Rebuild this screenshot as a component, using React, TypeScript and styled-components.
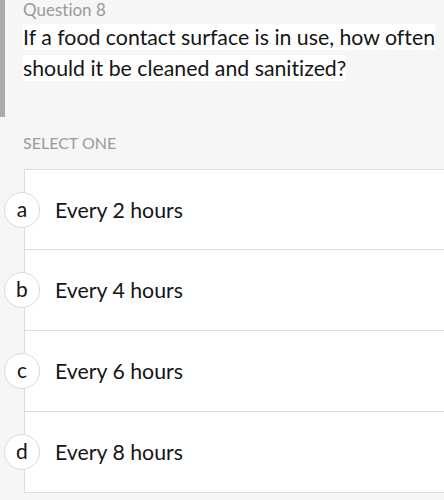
import React from "react";
import styled, { createGlobalStyle } from "styled-components";

const Global = createGlobalStyle`
  html, body {
    margin: 0;
    padding: 0;
    background: #f6f6f6;
    overflow: hidden;
  }
  body {
    font-family: Lato, "Noto Sans", sans-serif;
    font-variant-ligatures: none;
    font-feature-settings: "liga" 0, "clig" 0;
  }
`;

const Page = styled.div`
  position: relative;
  width: 444px;
  height: 500px;
  padding: 0 0 0 23px;
  box-sizing: border-box;
`;

const SideBar = styled.div`
  position: absolute;
  left: 0;
  top: 0;
  width: 5px;
  height: 117px;
  background: #ababab;
`;

const Label = styled.div`
  font-size: 17px;
  line-height: 18px;
  color: #9a9a9a;
  padding-top: 1px;
`;

const Question = styled.div`
  margin-top: 3px;
  font-size: 21.3px;
  line-height: 31px;
  color: #151515;
`;

const Highlight = styled.span`
  background: #ffffff;
  box-decoration-break: clone;
  -webkit-box-decoration-break: clone;
`;

const SelectLabel = styled.div`
  margin-top: 50px;
  font-size: 16px;
  line-height: 18px;
  color: #9a9a9a;
  text-transform: uppercase;
`;

const List = styled.div`
  margin-top: 17px;
  margin-left: 1px;
  margin-right: -20px;
  display: flex;
  flex-direction: column;
`;

const Option = styled.div<{ $first?: boolean }>`
  position: relative;
  height: 81px;
  box-sizing: border-box;
  background: #fff;
  border: 1px solid #dcdcdc;
  border-top: ${(p) => (p.$first ? "1px solid #dcdcdc" : "none")};
  display: flex;
  align-items: center;
  padding-left: 30px;
  font-size: 21.3px;
  color: #151515;
`;

const Badge = styled.div`
  position: absolute;
  left: -21px;
  top: 50%;
  width: 36px;
  height: 36px;
  margin-top: -18px;
  border-radius: 50%;
  background: #fff;
  border: 1px solid #dadada;
  box-sizing: border-box;
  display: flex;
  align-items: center;
  justify-content: center;
  font-size: 21px;
  color: #151515;
  padding-bottom: 3px;
`;

const options = [
  { key: "a", text: "Every 2 hours" },
  { key: "b", text: "Every 4 hours" },
  { key: "c", text: "Every 6 hours" },
  { key: "d", text: "Every 8 hours" },
];

export default function App() {
  return (
    <Page>
      <Global />
      <SideBar />
      <Label>Question 8</Label>
      <Question>
        <Highlight>If a food contact surface is in use, how often should it be cleaned and sanitized?</Highlight>
      </Question>
      <SelectLabel>Select One</SelectLabel>
      <List>
        {options.map((o, i) => (
          <Option key={o.key} $first={i === 0}>
            <Badge>{o.key}</Badge>
            {o.text}
          </Option>
        ))}
      </List>
    </Page>
  );
}
